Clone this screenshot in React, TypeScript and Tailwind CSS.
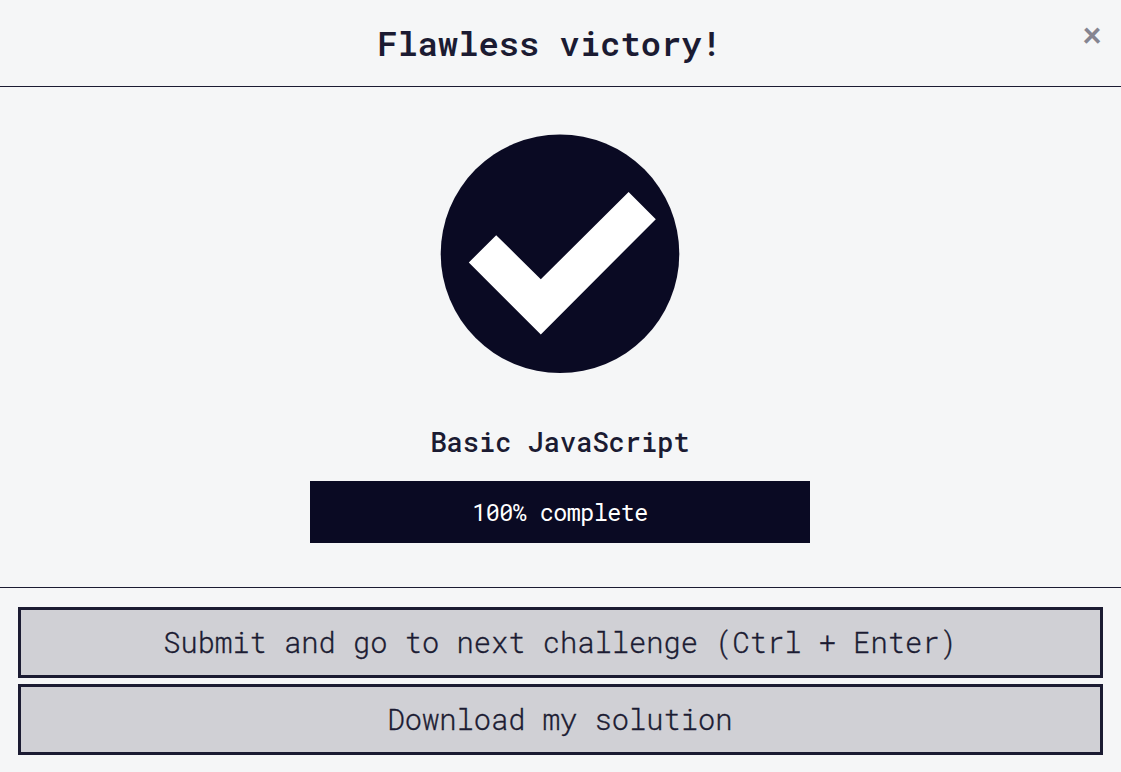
function CheckBadge() {
  return (
    <svg viewBox="0 0 240 240" className="block size-60" aria-hidden="true">
      <circle cx="120" cy="119.7" r="119.3" fill="#0a0a23" />
      <path d="M28.8 128.5L56.2 101.2L100.8 145.3L188.6 58L215.8 85.2L100.8 200.4Z" fill="#fff" />
    </svg>
  );
}

function ActionButton({ label }: { label: string }) {
  return (
    <button className="flex h-[71px] w-full items-center justify-center border-3 border-[#1b1b32] bg-[#d0d0d5] pr-px text-[28.75px] font-light [-webkit-text-stroke:0.35px]">
      {label}
    </button>
  );
}

export default function App() {
  return (
    <div className="flex h-[772px] w-full flex-col bg-[#f5f6f7] font-['Roboto_Mono','Liberation_Mono',monospace] text-[#1b1b32]">
      <header className="flex h-[87px] shrink-0 items-start border-b border-[#1b1b32]">
        <h1 className="flex-1 pt-[21px] pl-[19px] text-center text-[33.75px] leading-[44px] font-semibold">Flawless victory!</h1>
        <button className="mt-[20px] mr-[17px] flex w-6 justify-center font-['Lato',sans-serif] text-[33.75px] leading-7 font-black text-[#858591]">
          ×
        </button>
      </header>
      <main className="flex h-[500px] shrink-0 flex-col items-center pt-[47px] pr-px">
        <CheckBadge />
        <h2 className="mt-[50px] text-[27px] leading-9 font-medium">Basic JavaScript</h2>
        <div className="mt-[21px] flex h-[62px] w-[500px] items-center justify-center bg-[#0a0a23] text-[23.4px] tracking-[-0.54px] text-white">
          100% complete
        </div>
      </main>
      <footer className="flex flex-1 flex-col gap-1.5 border-t border-[#1b1b32] px-[18px] pt-[19px]">
        <ActionButton label="Submit and go to next challenge (Ctrl + Enter)" />
        <ActionButton label="Download my solution" />
      </footer>
    </div>
  );
}
